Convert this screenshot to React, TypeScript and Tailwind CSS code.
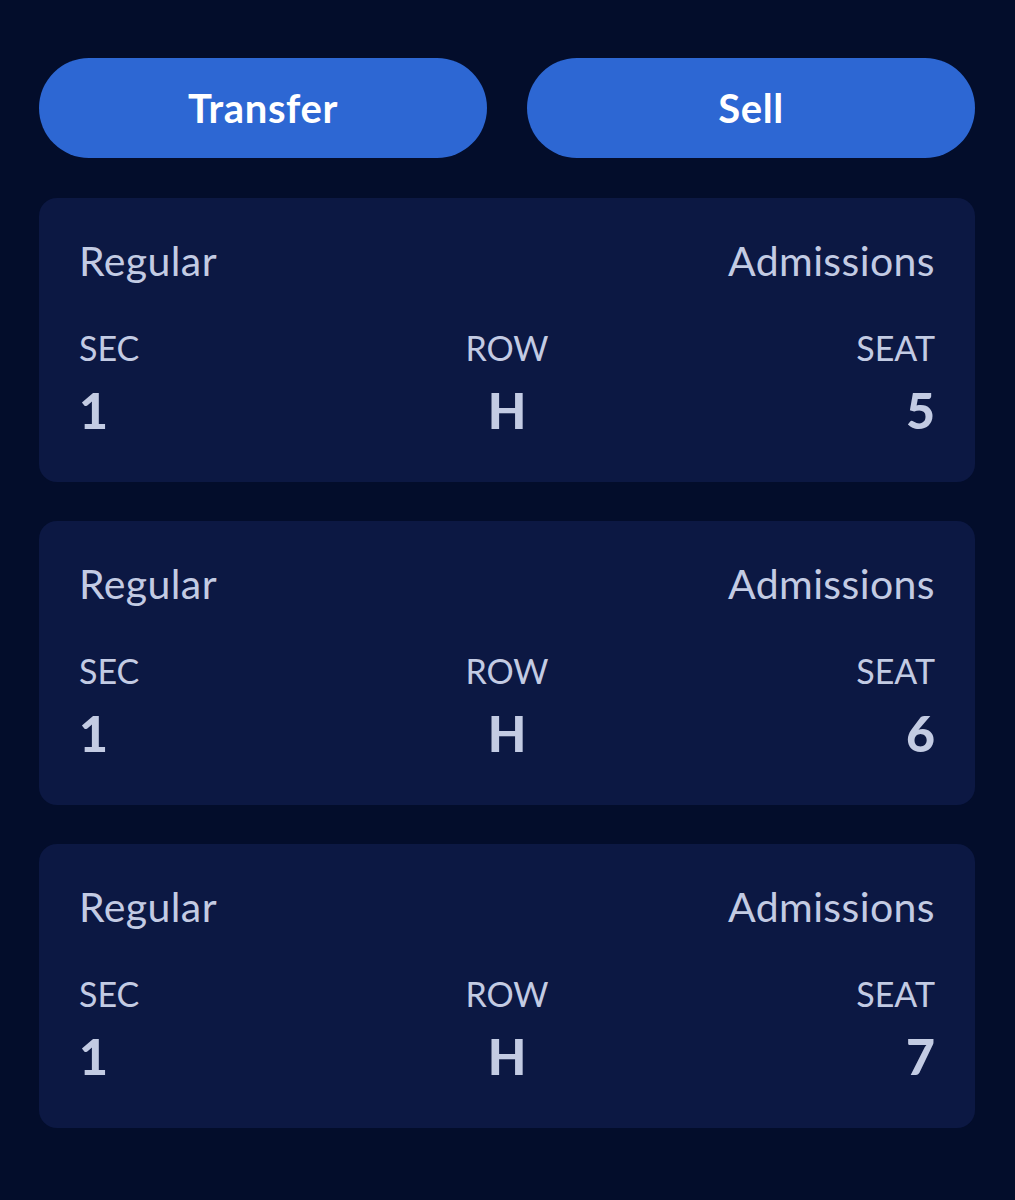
const TICKETS = [
  { sec: "1", row: "H", seat: "5" },
  { sec: "1", row: "H", seat: "6" },
  { sec: "1", row: "H", seat: "7" },
];

function TicketCard({ sec, row, seat }: { sec: string; row: string; seat: string }) {
  return (
    <div className="rounded-[18px] bg-[#0c1843] pl-10 pr-10 pt-[43px] pb-[47px] text-[#c3cbe3]">
      <div className="flex justify-between text-[41px] leading-[40px] tracking-[0.4px]">
        <span>Regular</span>
        <span>Admissions</span>
      </div>
      <div className="mt-[50px] grid grid-cols-3 text-[34px] leading-none">
        <span className="text-left">SEC</span>
        <span className="text-center">ROW</span>
        <span className="text-right">SEAT</span>
      </div>
      <div className="mt-5 grid grid-cols-3 text-[50px] font-black leading-none">
        <span className="text-left">{sec}</span>
        <span className="text-center">{row}</span>
        <span className="text-right">{seat}</span>
      </div>
    </div>
  );
}

export default function App() {
  return (
    <div className="min-h-[1200px] bg-[#030d2b] pl-[39px] pr-10 pt-[58px] font-['Lato',sans-serif]">
      <div className="grid grid-cols-2 gap-10">
        <button className="h-[100px] rounded-full bg-[#2d67d3] text-[40px] font-bold tracking-[0.6px] text-white">
          Transfer
        </button>
        <button className="h-[100px] rounded-full bg-[#2d67d3] text-[40px] font-bold tracking-[0.6px] text-white">
          Sell
        </button>
      </div>
      <div className="mt-10 flex flex-col gap-[39px]">
        {TICKETS.map((t) => (
          <TicketCard key={t.seat} {...t} />
        ))}
      </div>
    </div>
  );
}
